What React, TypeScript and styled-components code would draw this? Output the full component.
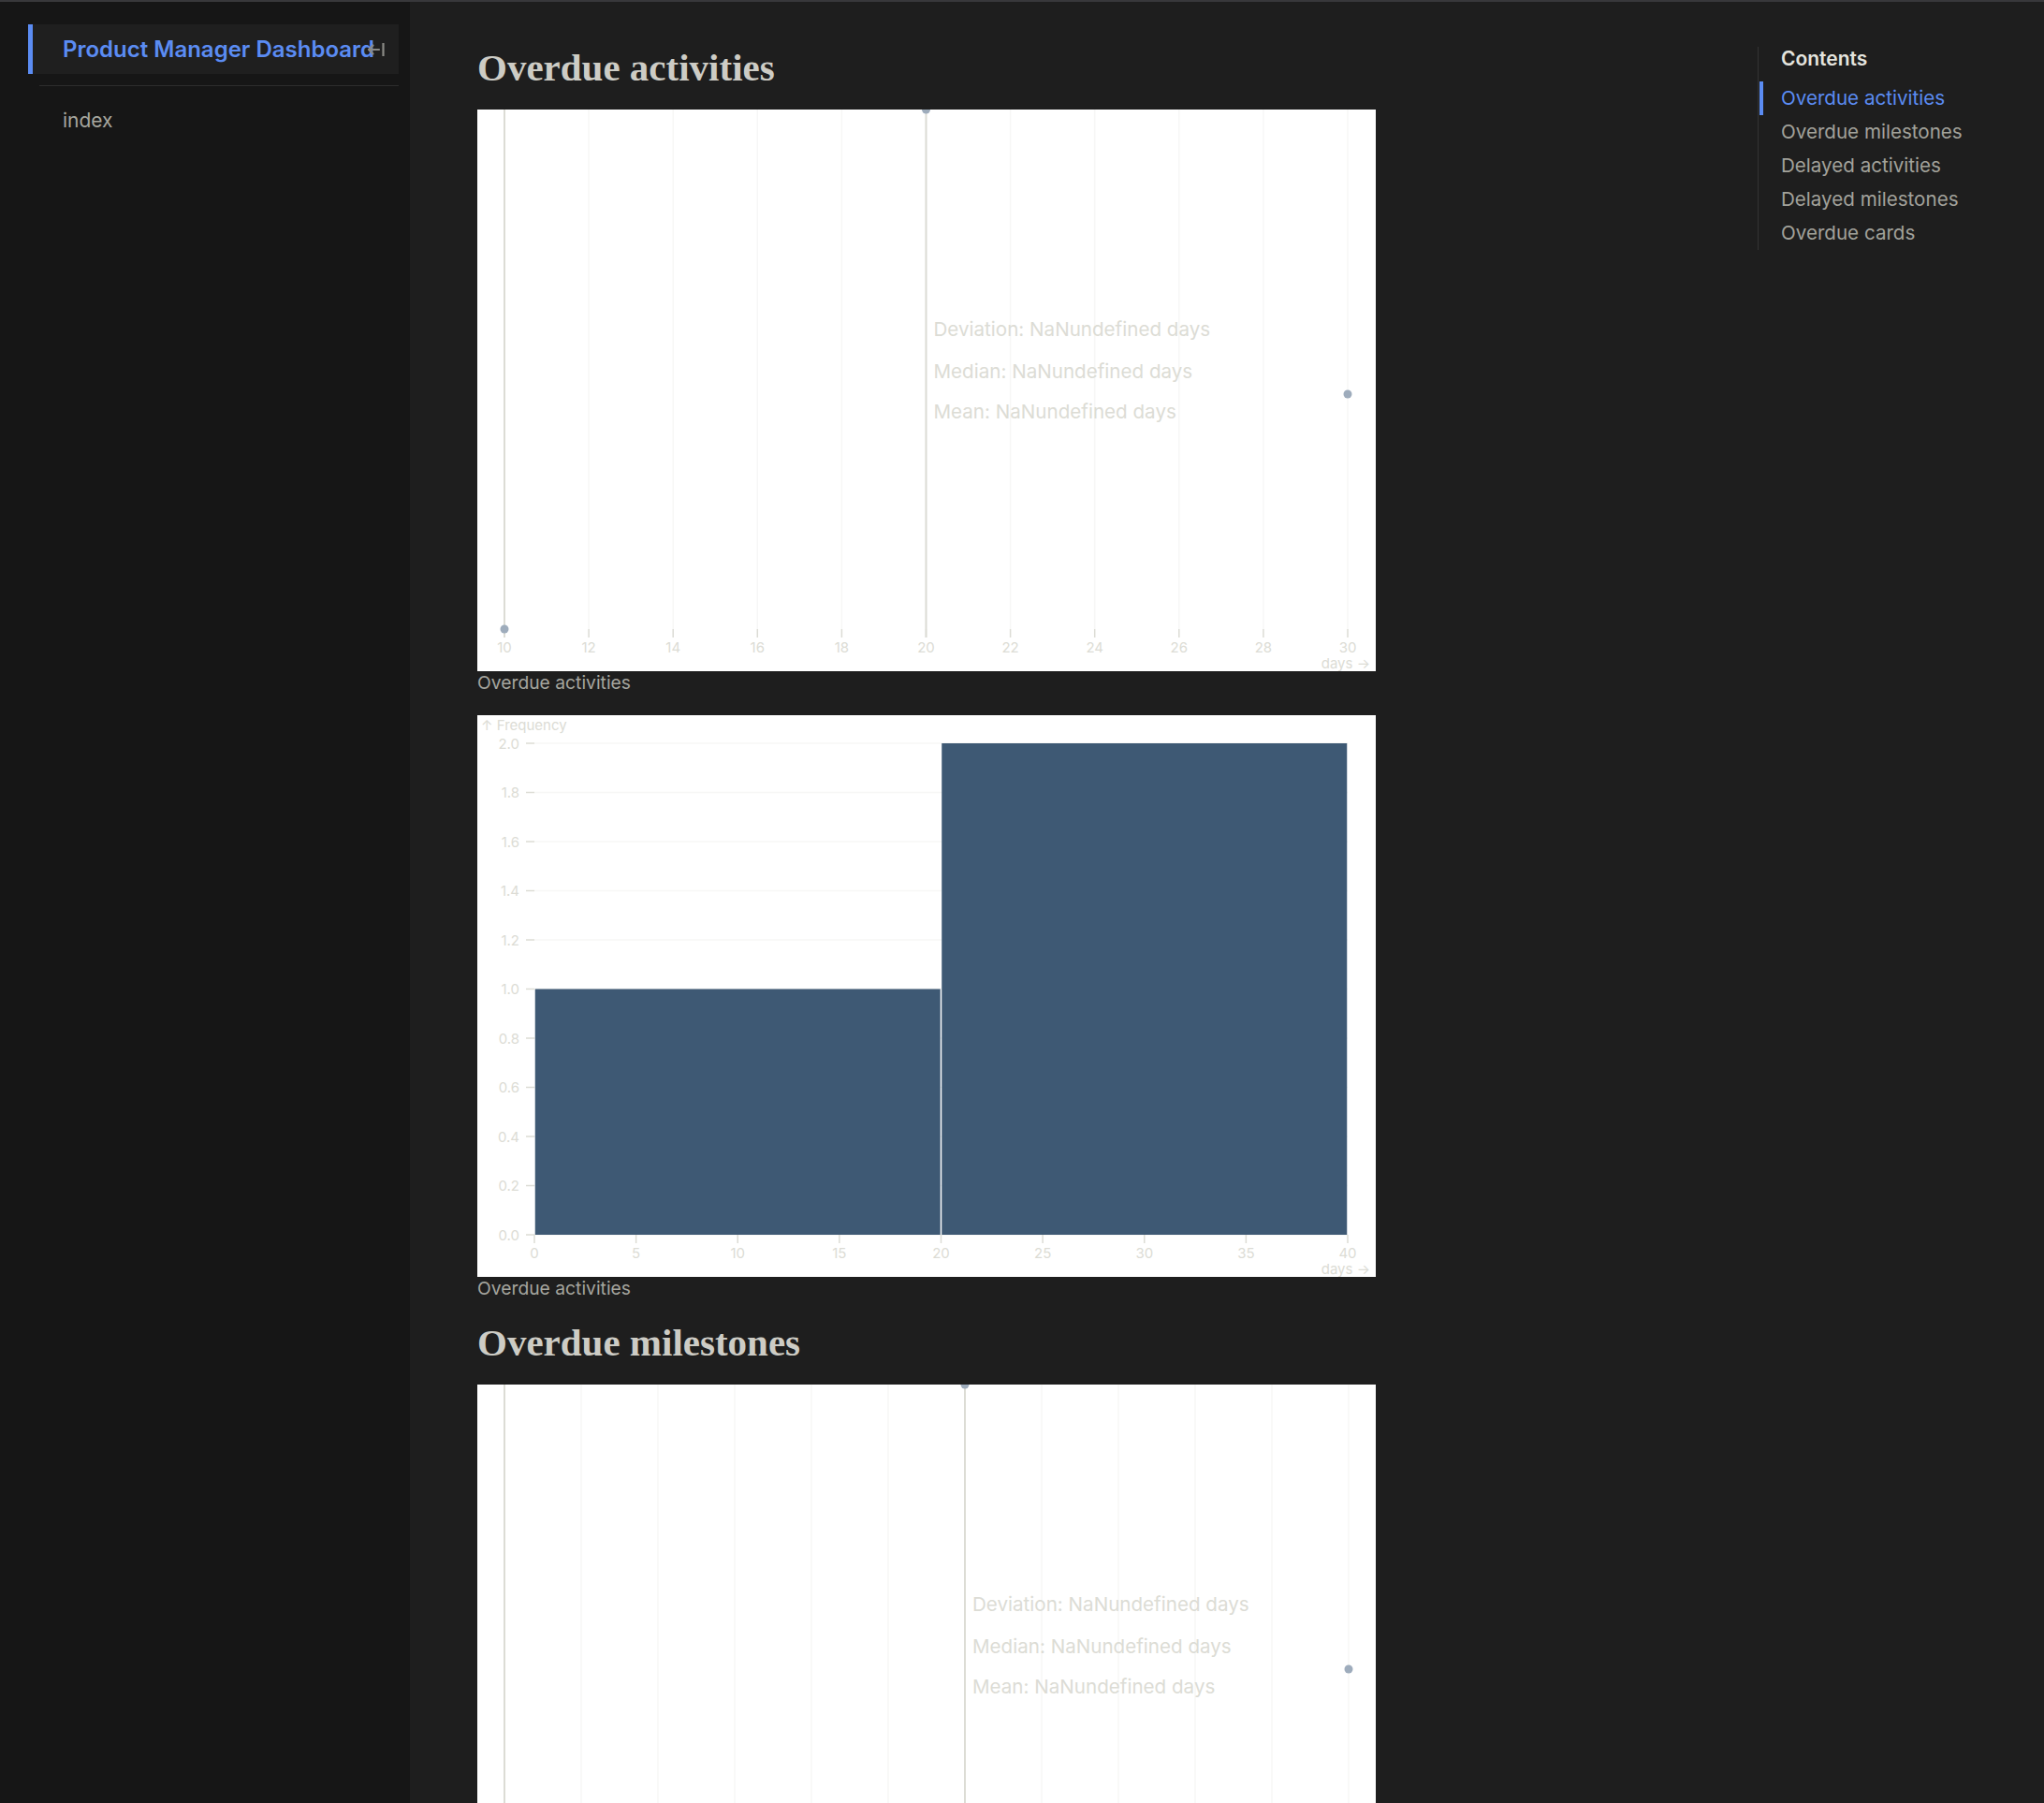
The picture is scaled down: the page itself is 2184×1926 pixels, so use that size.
import React from "react";
import styled, { createGlobalStyle } from "styled-components";

const BLUE = "#5b8cf3";
const CHART_INK = "#dcdcd5";

const GlobalStyle = createGlobalStyle`
  html, body { margin: 0; padding: 0; background: #1e1e1e; }
  body {
    font-family: Inter, "Noto Sans", "Liberation Sans", sans-serif;
    color: #dedede;
  }
  * { box-sizing: border-box; }
`;

const TopLine = styled.div`
  height: 2px;
  background: #38383b;
`;

const Layout = styled.div`
  display: grid;
  grid-template-columns: 438px 1fr 306px;
  min-height: calc(100vh - 2px);
`;

const Sidebar = styled.nav`
  background: #161616;
  padding-top: 24px;
`;

const TitleRow = styled.div`
  position: relative;
  display: flex;
  align-items: center;
  margin-left: 30px;
  width: 396px;
  height: 53px;
  border-left: 5px solid ${BLUE};
  background: #1f1f1f;
  padding-left: 32px;
  color: ${BLUE};
  font-size: 24px;
  font-weight: 600;
  white-space: nowrap;
`;

const ToggleButton = styled.span`
  position: absolute;
  right: 13px;
  top: 50%;
  transform: translateY(-50%);
  display: flex;
  color: #8a8a86;
`;

const Separator = styled.div`
  margin: 12px 0 0 42px;
  width: 384px;
  height: 1px;
  background: #2d2d2d;
`;

const SideLink = styled.a`
  display: block;
  margin-top: 22px;
  padding-left: 67px;
  font-size: 21px;
  line-height: 30px;
  color: #a6a69f;
  text-decoration: none;
`;

const Main = styled.main`
  padding: 47px 0 0 72px;
`;

const Heading = styled.h2`
  margin: 0 0 22px;
  font-family: "Liberation Serif", "DejaVu Serif", serif;
  font-weight: 700;
  font-size: 41px;
  line-height: 46px;
  color: #cdccc5;
`;

const Figure = styled.figure`
  margin: 0 0 23px;
  width: 960px;
`;

const ChartSvg = styled.svg`
  display: block;
  background: #ffffff;
  font-family: Inter, "Noto Sans", "Liberation Sans", sans-serif;
`;

const Caption = styled.figcaption`
  font-size: 19.3px;
  line-height: 24px;
  color: #a5a59e;
`;

const Aside = styled.aside`
  padding-top: 48px;
`;

const Toc = styled.nav`
  border-left: 1px solid #333333;
  padding-left: 24px;
`;

const TocTitle = styled.div`
  font-size: 21px;
  font-weight: 600;
  line-height: 26px;
  color: #e4e4de;
  margin-bottom: 11px;
`;

const TocItem = styled.a<{ $active?: boolean }>`
  position: relative;
  display: block;
  font-size: 20.6px;
  line-height: 36px;
  color: ${(p) => (p.$active ? BLUE : "#a2a29b")};
  text-decoration: none;
  &::before {
    content: "";
    display: ${(p) => (p.$active ? "block" : "none")};
    position: absolute;
    left: -23px;
    top: 0;
    bottom: 0;
    width: 4px;
    background: ${BLUE};
  }
`;

const W = 960;
const H = 600;
const PLOT_BOTTOM = 555;
const DOT = "#9eacbc";

type DotRuleProps = {
  tickLabels: number[];
  step: number;
  ruleIndex: number;
  rightDotY: number;
};

function DotRuleChart({ tickLabels, step, ruleIndex, rightDotY }: DotRuleProps) {
  const x0 = 29;
  const xs = tickLabels.map((_, i) => x0 + i * step);
  const ruleX = xs[ruleIndex];
  const lastX = xs[xs.length - 1];
  const lines = [
    { t: "Deviation: NaNundefined days", y: 234 },
    { t: "Median: NaNundefined days", y: 279 },
    { t: "Mean: NaNundefined days", y: 322 },
  ];
  return (
    <ChartSvg width={W} height={H} viewBox={`0 0 ${W} ${H}`}>
      {xs.map((x, i) => (
        <line key={`g${i}`} x1={x} x2={x} y1={0} y2={PLOT_BOTTOM} stroke={CHART_INK} strokeOpacity={0.22} strokeWidth={1.5} />
      ))}
      {xs.map((x, i) => (
        <line key={`t${i}`} x1={x} x2={x} y1={PLOT_BOTTOM} y2={PLOT_BOTTOM + 9} stroke={CHART_INK} strokeWidth={1.5} />
      ))}
      {xs.map((x, i) => (
        <text key={`l${i}`} x={x} y={574} textAnchor="middle" dominantBaseline="central" fontSize={15} fill={CHART_INK}>
          {tickLabels[i]}
        </text>
      ))}
      <text x={954} y={591} textAnchor="end" dominantBaseline="central" fontSize={15} fill={CHART_INK}>
        days →
      </text>
      <line x1={x0} x2={x0} y1={0} y2={PLOT_BOTTOM + 9} stroke={CHART_INK} strokeWidth={2} />
      <line x1={ruleX} x2={ruleX} y1={0} y2={PLOT_BOTTOM + 9} stroke={CHART_INK} strokeWidth={2} />
      {lines.map((l) => (
        <text key={l.t} x={ruleX + 8} y={l.y} dominantBaseline="central" fontSize={20.6} fill={CHART_INK}>
          {l.t}
        </text>
      ))}
      <circle cx={x0} cy={PLOT_BOTTOM} r={4.5} fill={DOT} />
      <circle cx={ruleX} cy={0} r={4.5} fill={DOT} />
      <circle cx={lastX} cy={rightDotY} r={4.5} fill={DOT} />
    </ChartSvg>
  );
}

function Histogram() {
  const left = 61;
  const right = 930;
  const top = 30;
  const bottom = PLOT_BOTTOM;
  const x = (v: number) => left + (v / 40) * (right - left);
  const y = (v: number) => bottom - (v / 2) * (bottom - top);
  const yTicks = Array.from({ length: 11 }, (_, i) => i * 0.2);
  const xTicks = Array.from({ length: 9 }, (_, i) => i * 5);
  const bars = [
    { x1: 0, x2: 20, h: 1 },
    { x1: 20, x2: 40, h: 2 },
  ];
  return (
    <ChartSvg width={W} height={H} viewBox={`0 0 ${W} ${H}`}>
      <text x={4} y={10} dominantBaseline="central" fontSize={15} fill={CHART_INK}>
        ↑ Frequency
      </text>
      {yTicks.map((v) => (
        <g key={`y${v}`}>
          <line x1={left} x2={right} y1={y(v)} y2={y(v)} stroke={CHART_INK} strokeOpacity={0.22} strokeWidth={1.5} />
          <line x1={left - 9} x2={left} y1={y(v)} y2={y(v)} stroke={CHART_INK} strokeWidth={1.5} />
          <text x={left - 16} y={y(v)} textAnchor="end" dominantBaseline="central" fontSize={15} fill={CHART_INK}>
            {v.toFixed(1)}
          </text>
        </g>
      ))}
      {bars.map((b) => (
        <rect
          key={b.x1}
          x={x(b.x1) + 0.75}
          width={x(b.x2) - x(b.x1) - 1.5}
          y={y(b.h)}
          height={bottom - y(b.h)}
          fill="#3e5974"
        />
      ))}
      {xTicks.map((v) => (
        <g key={`x${v}`}>
          <line x1={x(v)} x2={x(v)} y1={bottom} y2={bottom + 9} stroke={CHART_INK} strokeWidth={1.5} />
          <text x={x(v)} y={574} textAnchor="middle" dominantBaseline="central" fontSize={15} fill={CHART_INK}>
            {v}
          </text>
        </g>
      ))}
      <text x={954} y={591} textAnchor="end" dominantBaseline="central" fontSize={15} fill={CHART_INK}>
        days →
      </text>
    </ChartSvg>
  );
}

function ToggleIcon() {
  return (
    <svg width="22" height="22" viewBox="0 0 22 22" fill="none" stroke="currentColor" strokeWidth="2.2">
      <path d="M14 11H3M7.5 6.5L3 11l4.5 4.5" strokeLinecap="round" strokeLinejoin="round" />
      <path d="M18.5 4v14" />
    </svg>
  );
}

const tocItems = [
  "Overdue activities",
  "Overdue milestones",
  "Delayed activities",
  "Delayed milestones",
  "Overdue cards",
];

export default function App() {
  const ticks1 = Array.from({ length: 11 }, (_, i) => 10 + i * 2);
  const ticks3 = Array.from({ length: 12 }, (_, i) => i * 2);
  return (
    <>
      <GlobalStyle />
      <TopLine />
      <Layout>
        <Sidebar>
          <TitleRow>
            Product Manager Dashboard
            <ToggleButton>
              <ToggleIcon />
            </ToggleButton>
          </TitleRow>
          <Separator />
          <SideLink href="#">index</SideLink>
        </Sidebar>
        <Main>
          <Heading>Overdue activities</Heading>
          <Figure>
            <DotRuleChart tickLabels={ticks1} step={90.1} ruleIndex={5} rightDotY={304} />
            <Caption>Overdue activities</Caption>
          </Figure>
          <Figure>
            <Histogram />
            <Caption>Overdue activities</Caption>
          </Figure>
          <Heading>Overdue milestones</Heading>
          <Figure>
            <DotRuleChart tickLabels={ticks3} step={82} ruleIndex={6} rightDotY={304} />
            <Caption>Overdue milestones</Caption>
          </Figure>
        </Main>
        <Aside>
          <Toc>
            <TocTitle>Contents</TocTitle>
            {tocItems.map((t, i) => (
              <TocItem key={t} href="#" $active={i === 0}>
                {t}
              </TocItem>
            ))}
          </Toc>
        </Aside>
      </Layout>
    </>
  );
}
